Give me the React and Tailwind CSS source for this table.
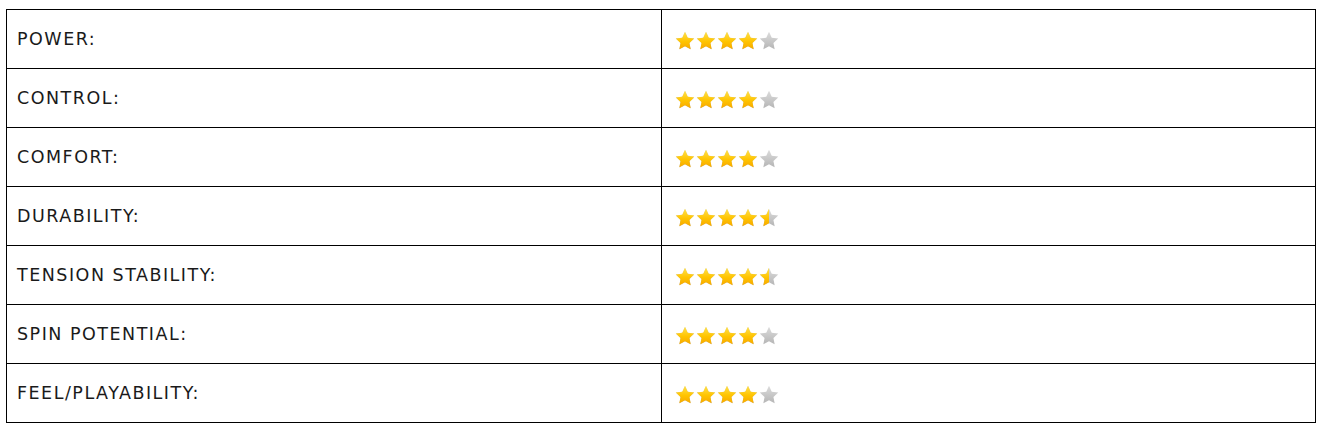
import { useId } from 'react'

const ratings = [
  ['POWER:', 4],
  ['CONTROL:', 4],
  ['COMFORT:', 4],
  ['DURABILITY:', 4.5],
  ['TENSION STABILITY:', 4.5],
  ['SPIN POTENTIAL:', 4],
  ['FEEL/PLAYABILITY:', 4],
]

const STAR = 'M10 0.8l2.75 5.9 6.45.8-4.75 4.45 1.2 6.4L10 15.2l-5.65 3.15 1.2-6.4L.8 7.5l6.45-.8z'

function Star({ fill }) {
  const id = useId().replace(/:/g, '')
  return (
    <svg width="20" height="19" viewBox="0 0 20 19" className="block">
      <defs>
        <linearGradient id={`g${id}`} x1="0" y1="0" x2="0" y2="1">
          <stop offset="0" stopColor="#ffe14d" />
          <stop offset="0.55" stopColor="#ffc400" />
          <stop offset="1" stopColor="#f7a800" />
        </linearGradient>
        <linearGradient id={`s${id}`} x1="0" y1="0" x2="0" y2="1">
          <stop offset="0" stopColor="#dcdcdc" />
          <stop offset="1" stopColor="#b5b5b5" />
        </linearGradient>
        <clipPath id={`c${id}`}>
          <rect x="0" y="0" width={20 * fill} height="19" />
        </clipPath>
      </defs>
      <path d={STAR} fill={`url(#s${id})`} />
      {fill > 0 && <path d={STAR} fill={`url(#g${id})`} clipPath={`url(#c${id})`} />}
    </svg>
  )
}

function Stars({ value }) {
  return (
    <div className="flex gap-[1px] pt-[2px]">
      {[0, 1, 2, 3, 4].map((i) => (
        <Star key={i} fill={Math.max(0, Math.min(1, value - i))} />
      ))}
    </div>
  )
}

export default function App() {
  return (
    <div className="bg-white w-[1322px] h-[426px] pt-[9px] pl-[6px]" style={{ fontFamily: '"DejaVu Sans", sans-serif' }}>
      <table className="border-collapse w-[1310px] table-fixed">
        <tbody>
          {ratings.map(([label, value]) => (
            <tr key={label} className="h-[59px]">
              <td className="w-[655px] border border-black pl-[10px] pt-[1px] text-[17.5px] tracking-[1.5px] text-[#1a1a1a] align-middle leading-none">
                {label}
              </td>
              <td className="border border-black pl-[13px] align-middle">
                <Stars value={value} />
              </td>
            </tr>
          ))}
        </tbody>
      </table>
    </div>
  )
}
